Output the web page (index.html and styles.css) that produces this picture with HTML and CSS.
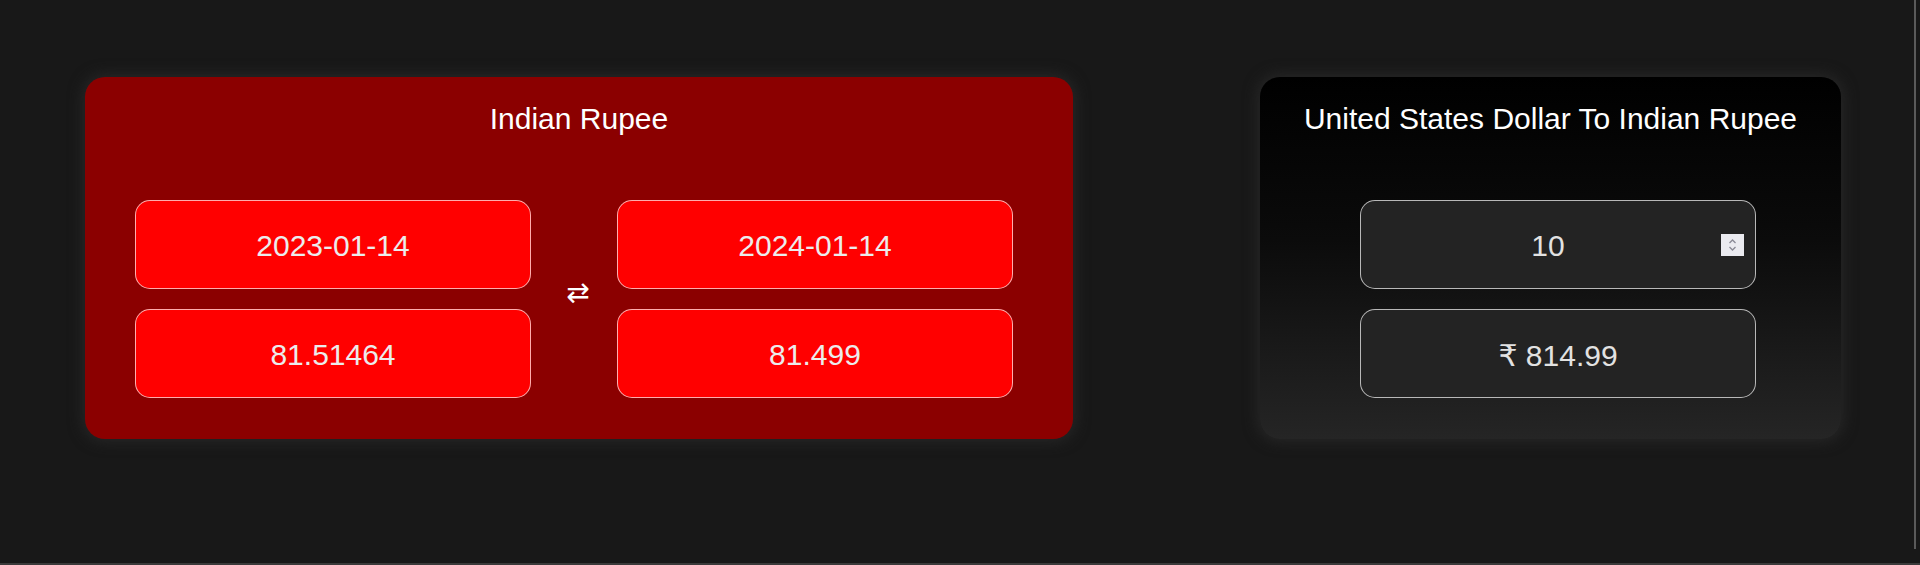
FILE: index.html
```html
<!DOCTYPE html>
<html lang="en">
<head>
<meta charset="utf-8">
<title>Currency Converter</title>
<link rel="stylesheet" href="styles.css">
</head>
<body>
<main class="page">
  <section class="card card-history">
    <h2 class="card-title">Indian Rupee</h2>
    <div class="history-grid">
      <div class="field field-red">2023-01-14</div>
      <div class="swap">&#8644;</div>
      <div class="field field-red">2024-01-14</div>
      <div class="field field-red">81.51464</div>
      <div class="field field-red">81.499</div>
    </div>
  </section>
  <section class="card card-convert">
    <h2 class="card-title">United States Dollar To Indian Rupee</h2>
    <div class="convert-stack">
      <div class="field field-dark field-number">
        <span class="num-value">10</span>
        <span class="spinner">
          <svg width="23" height="22" viewBox="0 0 23 22"><path d="M8.5 9 L11.5 6 L14.5 9" fill="none" stroke="#8a8a96" stroke-width="1.3"/><path d="M8.5 13 L11.5 16 L14.5 13" fill="none" stroke="#8a8a96" stroke-width="1.3"/></svg>
        </span>
      </div>
      <div class="field field-dark">&#8377; 814.99</div>
    </div>
  </section>
</main>
<div class="edge-v"></div>
<div class="edge-h"></div>
</body>
</html>
```
FILE: styles.css
```css
html, body {
  margin: 0;
  padding: 0;
  background: #181818;
  height: 565px;
  overflow: hidden;
  font-family: "Liberation Sans", Arial, "DejaVu Sans", sans-serif;
}

.page {
  display: flex;
  align-items: stretch;
  padding: 77px 0 0 85px;
  gap: 187px;
}

.card {
  box-sizing: border-box;
  height: 362px;
  border-radius: 20px;
  padding-top: 24px;
  box-shadow: 0 0 14px 3px #262626;
}

.card-history {
  width: 988px;
  background: #8b0000;
  padding-left: 50px;
}

.card-convert {
  width: 581px;
  background: linear-gradient(to bottom, #000000 0%, #0b0b0b 45%, #252525 100%);
  padding-left: 100px;
}

.card-title {
  margin: 0 0 64px 0;
  font-size: 30px;
  line-height: 35px;
  font-weight: normal;
  color: #ffffff;
  text-align: center;
}

.card-history .card-title {
  margin-left: -50px;
}

.card-convert .card-title {
  margin-left: -100px;
}

.history-grid {
  display: grid;
  grid-template-columns: 396px 86px 396px;
  grid-template-rows: 89px 89px;
  row-gap: 20px;
}

.swap {
  grid-column: 2;
  grid-row: 1 / span 2;
  display: flex;
  align-items: center;
  justify-content: center;
  padding-left: 8px;
  padding-bottom: 14px;
  font-family: "DejaVu Sans", sans-serif;
  font-size: 28px;
  color: #ffffff;
}

.field {
  box-sizing: border-box;
  height: 89px;
  border-radius: 15px;
  border: 1px solid rgba(255, 255, 255, 0.68);
  display: flex;
  align-items: center;
  justify-content: center;
  padding-top: 3px;
  font-size: 30px;
  color: #ececec;
}

.field-red {
  background: #ff0000;
}

.convert-stack {
  display: flex;
  flex-direction: column;
  gap: 20px;
  width: 396px;
}

.field-dark {
  background: #232323;
  color: #e2e2e2;
}

.field-number {
  position: relative;
  padding-right: 20px;
}

.spinner {
  position: absolute;
  right: 11px;
  top: 33px;
  width: 23px;
  height: 22px;
  background: #ebebf0;
  display: block;
}

.spinner svg {
  display: block;
}

.edge-v {
  position: fixed;
  left: 1914px;
  top: 0;
  width: 2px;
  height: 549px;
  background: #5a5a5a;
}

.edge-h {
  position: fixed;
  left: 0;
  top: 563px;
  width: 1920px;
  height: 2px;
  background: #3a3a3a;
}
```
